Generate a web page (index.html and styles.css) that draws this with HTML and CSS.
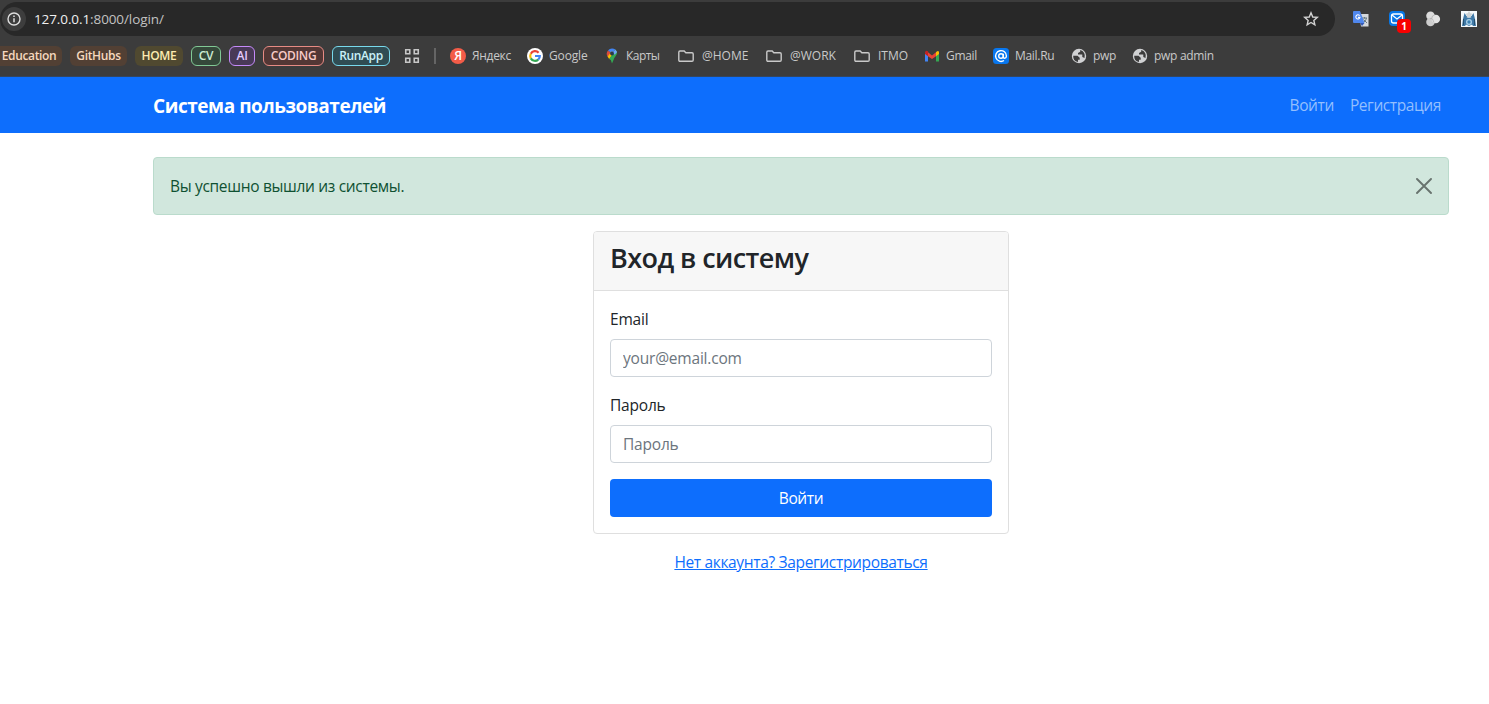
FILE: index.html
```html
<!DOCTYPE html>
<html lang="ru">
<head>
<meta charset="utf-8">
<title>Вход в систему</title>
<link rel="stylesheet" href="styles.css">
</head>
<body>
<header class="browser">
  <div class="toolbar">
    <div class="omnibox">
      <span class="site-info"><svg width="14" height="14" viewBox="0 0 14 14"><circle cx="7" cy="7" r="6" fill="none" stroke="#dedede" stroke-width="1.4"/><path d="M7 6.3v4M7 3.6v1.5" stroke="#dedede" stroke-width="1.5"/></svg></span>
      <span class="url"><b>127.0.0.1</b>:8000/login/</span>
      <svg class="star" width="16" height="16" viewBox="0 0 16 16"><path d="M8 1.8l1.750 4.200 4.550.4-3.450 3 1 4.450L8 11.500l-3.850 2.350 1-4.450L1.700 6.400l4.550-.4z" fill="none" stroke="#d2d2d2" stroke-width="1.4"/></svg>
    </div>
    <div class="extensions">
      <svg width="18" height="18" viewBox="0 0 18 18"><path d="M7 4h9.500v12.500H9z" fill="#d5d8db"/><path d="M10 8h5M12.500 7v1.500M14.500 8c-.5 2-2 4-3.500 5M11.500 9.500l3.500 3.500" stroke="#64777f" fill="none"/><path d="M2 1h6l4.500 12H2a1 1 0 0 1-1-1V2a1 1 0 0 1 1-1z" fill="#5087ed"/><path d="M8 13h4.500L10 16z" fill="#3359b5"/><path d="M7.600 5.600A2.100 2.100 0 1 0 8 7.400H6" fill="none" stroke="#fff" stroke-width="1.100"/></svg>
      <span class="mail-ext"><svg width="18" height="18" viewBox="0 0 18 18"><rect x="1" y="1" width="16" height="15" rx="4" fill="#0878e8"/><rect x="3.500" y="4" width="11" height="9" rx="2" fill="none" stroke="#fff" stroke-width="1.300"/><path d="M4 5l5 4 5-4" fill="none" stroke="#fff" stroke-width="1.300"/></svg><span class="count">1</span></span>
      <svg width="18" height="18" viewBox="0 0 18 18"><circle cx="6.500" cy="5.700" r="4.300" fill="#dcdcdc"/><circle cx="6.500" cy="12" r="4.300" fill="#cdcdcd"/><circle cx="11.800" cy="9" r="4.300" fill="#e3e3e3"/><path d="M6 8.500q3-1 4 4M7.500 9Q8 5 10.700 5" stroke="#aaa" fill="none" stroke-width=".7"/></svg>
      <svg width="18" height="18" viewBox="0 0 18 18"><path d="M1 1h16v16H1z" fill="#f4f8fa"/><path d="M4.500 3l2 3 2.500 2 2.500-2 2-3 1.500 6 1 7h-3l-1-1.500-3 1.500-3-1.500-1 1.500H2l1-7z" fill="#3e78a6"/><path d="M9 1l1.200 2.200 2.300.5-1.600 1.800.3 2.400L9 7l-2.200.9.3-2.400-1.600-1.800 2.300-.5z" fill="#cdd2d4"/><circle cx="9" cy="12" r="3" fill="#a9d0e8"/><circle cx="9" cy="12" r="1.700" fill="#3c81b4"/><path d="M3.500 9v6M14.500 9v6" stroke="#24506f"/></svg>
    </div>
  </div>
  <nav class="bookmarks">
    <span class="tag education">Education</span><span class="tag githubs">GitHubs</span><span class="tag home">HOME</span><span class="tag cv">CV</span><span class="tag ai">AI</span><span class="tag coding">CODING</span><span class="tag runapp">RunApp</span>
    <svg class="apps" width="16" height="16" viewBox="0 0 16 16"><path d="M1.750 1.750h4v4h-4zM10.250 1.750h4v4h-4zM1.750 10.250h4v4h-4zM10.250 10.250h4v4h-4z" fill="none" stroke="#c7c7c7" stroke-width="1.600"/></svg>
    <span class="divider"></span>
    <span class="bookmark yandex"><span class="ya">Я</span>Яндекс</span>
    <span class="bookmark google"><svg width="16" height="16" viewBox="0 0 16 16"><circle cx="8" cy="8" r="8" fill="#fff"/><g fill="none" stroke-width="2.200"><path d="M11.600 4.700A4.800 4.800 0 0 0 3.800 5.700" stroke="#ea4335"/><path d="M3.800 5.700a4.800 4.800 0 0 0 0 4.700" stroke="#fbbc05"/><path d="M3.800 10.400a4.800 4.800 0 0 0 7.400 1.200" stroke="#34a853"/><path d="M11.200 11.600A4.600 4.600 0 0 0 12.800 8H8" stroke="#4285f4"/></g></svg>Google</span>
    <span class="bookmark maps"><svg width="16" height="16" viewBox="0 0 16 16"><path d="M8 .5a5.200 5.200 0 0 0-4 1.900L8 5.800l3.300-4.200A5.200 5.200 0 0 0 8 .5z" fill="#4285f4"/><path d="M4 2.400a5.200 5.200 0 0 0-.5 6L8 5.800z" fill="#d94b3c"/><path d="M3.500 8.400L8 3l1 4-3.800 4z" fill="#fbbc04"/><path d="M11.300 1.600c4.500 4-.9 7-1.600 9.900L8 15.500 6.800 12 5.200 11z" fill="#34a853"/><path d="M11.300 1.600L8 5.800l3 .8 2.100-2.500z" fill="#70a4f5"/><circle cx="8" cy="5.500" r="1.900" fill="#28394a"/></svg>Карты</span>
    <span class="bookmark folder f1"><svg width="16" height="16" viewBox="0 0 16 16"><path d="M2 3h4.200l1.600 1.700H14q1.200 0 1.200 1.200v6.200q0 1.200-1.200 1.200H2q-1.200 0-1.200-1.200V4.200Q.8 3 2 3z" fill="none" stroke="#c9c9c9" stroke-width="1.400"/></svg>@HOME</span>
    <span class="bookmark folder f2"><svg width="16" height="16" viewBox="0 0 16 16"><path d="M2 3h4.200l1.600 1.700H14q1.200 0 1.200 1.200v6.200q0 1.200-1.200 1.200H2q-1.200 0-1.200-1.200V4.200Q.8 3 2 3z" fill="none" stroke="#c9c9c9" stroke-width="1.400"/></svg>@WORK</span>
    <span class="bookmark folder f3"><svg width="16" height="16" viewBox="0 0 16 16"><path d="M2 3h4.200l1.600 1.700H14q1.200 0 1.200 1.200v6.200q0 1.200-1.200 1.200H2q-1.200 0-1.200-1.200V4.200Q.8 3 2 3z" fill="none" stroke="#c9c9c9" stroke-width="1.400"/></svg>ITMO</span>
    <span class="bookmark gmail"><svg width="16" height="16" viewBox="0 0 16 16"><path d="M1 4v9.500h3V6z" fill="#4285f4"/><path d="M12 6v7.500h3V4z" fill="#34a853"/><path d="M4 4.200l4 3.200 4-3.200v4L8 11 4 8.200z" fill="#ea4335"/><path d="M1 4.300Q1.600 1.800 4 3.300v4.900L1 6z" fill="#c5221f"/><path d="M12 4.200Q14.500 1.800 15 4.300V6l-3 2.200z" fill="#fbbc04"/></svg>Gmail</span>
    <span class="bookmark mailru"><svg width="16" height="16" viewBox="0 0 16 16"><rect width="16" height="16" rx="3.500" fill="#0877ef"/><circle cx="8" cy="8" r="2.300" fill="none" stroke="#fff" stroke-width="1.400"/><path d="M10.300 5.700v3q0 1.600 1.400 1.600 1.700-.2 1.700-2.300A5.400 5.400 0 1 0 11 12.500" fill="none" stroke="#fff" stroke-width="1.400"/></svg>Mail.Ru</span>
    <span class="bookmark pwp"><svg width="16" height="16" viewBox="0 0 16 16"><circle cx="8" cy="8" r="7.200" fill="#d0d1d3"/><path d="M2.200 7.700l4.300 0 2.200 2v2H7v2.200A6 6 0 0 1 2.200 7.700zM9.200 2.100v1.700L7 4.900v1.700h4.300V9l2.200 1A6 6 0 0 0 9.200 2.100z" fill="#3c3c3c"/></svg>pwp</span>
    <span class="bookmark admin"><svg width="16" height="16" viewBox="0 0 16 16"><circle cx="8" cy="8" r="7.200" fill="#d0d1d3"/><path d="M2.200 7.700l4.300 0 2.200 2v2H7v2.200A6 6 0 0 1 2.200 7.700zM9.200 2.100v1.700L7 4.900v1.700h4.300V9l2.200 1A6 6 0 0 0 9.200 2.100z" fill="#3c3c3c"/></svg>pwp admin</span>
  </nav>
</header>
<nav class="navbar">
  <a class="brand">Система пользователей</a>
  <div class="nav-links"><a>Войти</a><a>Регистрация</a></div>
</nav>
<main class="container">
  <div class="alert"><span>Вы успешно вышли из системы.</span><svg width="16" height="16" viewBox="0 0 16 16"><path d="M1 1l14 14M15 1L1 15" stroke="#68736e" stroke-width="1.900" stroke-linecap="round"/></svg></div>
  <section class="login">
    <div class="card">
      <div class="card-header"><h3>Вход в систему</h3></div>
      <form class="card-body">
        <label for="email">Email</label>
        <input id="email" type="email" placeholder="your@email.com">
        <label for="password">Пароль</label>
        <input id="password" type="password" placeholder="Пароль">
        <button type="button">Войти</button>
      </form>
    </div>
    <p class="signup"><a>Нет аккаунта? Зарегистрироваться</a></p>
  </section>
</main>
</body>
</html>
```
FILE: styles.css
```css
* { box-sizing: border-box; }
body { margin: 0; background: #fff; color: #212529; font: 15.500px/24px "Open Sans", "Noto Sans", sans-serif; letter-spacing: -.2px; }
svg { display: block; flex: none; }
.browser { height: 77px; background: #3c3c3c; border-bottom: 1px solid #34465f; }
.toolbar { display: flex; height: 36px; padding-top: 2px; }
.omnibox { display: flex; align-items: center; width: 1335px; height: 34px; padding: 0 16px 0 2px; border-radius: 17px; background: #282828; }
.site-info { display: grid; place-items: center; width: 24px; height: 24px; border-radius: 50%; background: #3d3d3d; }
.url { margin-left: 8px; color: #c2c2c2; font-size: 13.500px; letter-spacing: -.1px; }
.url b { color: #f0f0f0; font-weight: 400; }
.star { margin-left: auto; }
.extensions { display: flex; gap: 18px; padding: 8px 0 0 17px; }
.mail-ext { position: relative; width: 18px; }
.count { position: absolute; left: 9px; top: 9px; width: 14px; height: 14px; border-radius: 4px; background: #f80000; color: #fff; font-size: 10px; font-weight: 700; line-height: 14px; text-align: center; }
.bookmarks { display: flex; align-items: center; height: 40px; font-size: 12px; line-height: 16px; letter-spacing: -.3px; white-space: nowrap; color: #c9c9c9; }
.tag { display: flex; flex: none; align-items: center; justify-content: center; height: 20px; margin-right: 8px; border-radius: 6px; font-size: 12px; font-weight: 600; letter-spacing: -.35px; }
.education { width: 62px; padding-right: 4px; border-radius: 0 6px 6px 0; background: #524034; color: #f6d8bf; }
.githubs { width: 57px; background: #524034; color: #f6d8bf; }
.home { width: 48px; background: #504930; color: #fcebb0; }
.cv { width: 30px; border: 1px solid #81c995; background: #35483a; color: #cdebd3; }
.ai { width: 26px; border: 1px solid #c58af9; background: #493957; color: #e4caff; }
.coding { width: 61px; border: 1px solid #e78b84; background: #533735; color: #f8cbc7; }
.runapp { width: 58px; border: 1px solid #78d9ec; background: #304c53; color: #c9f1f8; }
.apps { margin: 0 14px 0 6px; }
.divider { flex: none; width: 2px; height: 16px; margin-right: 14px; background: #656565; }
.bookmark { display: flex; flex: none; align-items: center; gap: 6px; }
.folder { gap: 8px; letter-spacing: 0; }
.ya { width: 16px; height: 16px; border-radius: 50%; background: #f35c48; color: #fff; font-size: 12px; font-weight: 600; text-align: center; }
.yandex { width: 77px; }
.google { width: 77px; letter-spacing: -.15px; }
.maps { width: 74px; letter-spacing: -.55px; }
.f1, .f2 { width: 88px; }
.f3 { width: 70px; }
.gmail { width: 69px; }
.mailru { width: 78px; }
.pwp { width: 61px; }
.navbar { display: flex; align-items: center; justify-content: space-between; height: 56px; padding: 0 48px 0 153px; background: #0d6efd; }
.brand { padding-top: 1px; color: #fff; font-size: 19px; font-weight: 700; letter-spacing: -.45px; }
.nav-links { display: flex; gap: 16px; color: #93bffe; letter-spacing: -.4px; }
.container { width: 1296px; margin: 24px 0 0 153px; }
.alert { display: flex; align-items: center; justify-content: space-between; height: 58px; padding: 0 16px; border: 1px solid #badbcc; border-radius: 4px; background: #d1e7dd; color: #0f5132; letter-spacing: -.32px; }
.login { width: 416px; margin: 16px auto 0; }
.card { border: 1px solid #dfdfdf; border-radius: 4px; }
.card-header { height: 59px; padding: 9px 16px 7px; border-bottom: 1px solid #dfdfdf; border-radius: 3px 3px 0 0; background: #f7f7f7; }
h3 { margin: 0; font-size: 27px; font-weight: 600; line-height: 34px; letter-spacing: -.57px; }
.card-body { display: flex; flex-direction: column; padding: 16px; }
label { align-self: flex-start; margin-bottom: 8px; }
input { width: 100%; height: 38px; margin: 0 0 16px; padding: 6px 12px; border: 1px solid #ced4da; border-radius: 4px; background: #fff; color: #212529; font: inherit; letter-spacing: inherit; }
input::placeholder { color: #6c757d; opacity: 1; }
button { height: 38px; padding: 0; border: 0; border-radius: 4px; background: #0d6efd; color: #fff; font: inherit; letter-spacing: -.4px; }
.signup { margin: 16px 0 0; text-align: center; color: #0d6efd; letter-spacing: -.34px; }
.signup a { text-decoration: underline; }
```
